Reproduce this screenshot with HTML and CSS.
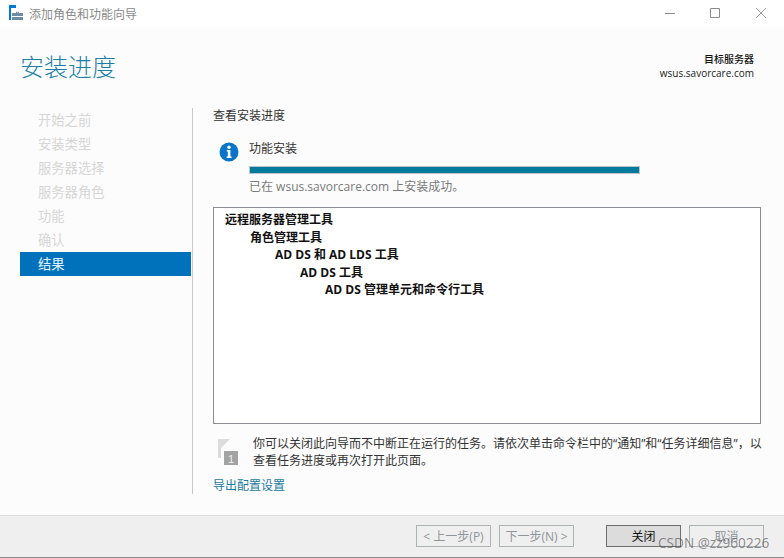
FILE: index.html
```html
<!DOCTYPE html>
<html lang="zh-CN">
<head>
<meta charset="utf-8">
<title>添加角色和功能向导</title>
<link rel="stylesheet" href="styles.css">
</head>
<body>
<div class="window">
  <div class="titlebar">
    <svg class="app-icon" width="16" height="16" viewBox="0 0 16 16">
      <path fill="#0078d7" d="M1 0h7v3H3v12H1z"/>
      <path fill="#6d8ca3" d="M4 8h4V6.800h3V8h4v3H4zM4 12h11v3H4z"/>
      <path fill="#fff" d="M8.800 7.400h1.400V8H8.800z"/>
    </svg>
    <span class="title-text">添加角色和功能向导</span>
    <div class="controls">
      <svg class="ctl ctl-min" width="10" height="10" viewBox="0 0 10 10"><path d="M0 5.500h10" stroke="#8c8c8c"/></svg>
      <svg class="ctl ctl-max" width="10" height="10" viewBox="0 0 10 10"><path d="M.5.500h9v9h-9z" fill="none" stroke="#8c8c8c"/></svg>
      <svg class="ctl" width="10" height="10" viewBox="0 0 10 10"><path d="M0 0l10 10M10 0L0 10" stroke="#a0a0a0"/></svg>
    </div>
  </div>
  <div class="content">
    <header class="head">
      <h1 class="page-title">安装进度</h1>
      <div class="server">
        <div class="server-label">目标服务器</div>
        <div class="server-name">wsus.savorcare.com</div>
      </div>
    </header>
    <div class="columns">
      <nav class="nav">
        <div class="nav-item">开始之前</div>
        <div class="nav-item">安装类型</div>
        <div class="nav-item">服务器选择</div>
        <div class="nav-item">服务器角色</div>
        <div class="nav-item">功能</div>
        <div class="nav-item">确认</div>
        <div class="nav-item nav-active">结果</div>
      </nav>
      <main class="main">
        <div class="section-title">查看安装进度</div>
        <div class="status">
          <svg class="info" width="20" height="20" viewBox="0 0 20 20">
            <circle cx="10" cy="10" r="9.500" fill="#0a74c9"/>
            <circle cx="10" cy="5.200" r="1.700" fill="#fff"/>
            <path fill="#fff" d="M7.800 8h3.600v6.500h1.200V16H7.600v-1.500h1.200V9.500h-1z"/>
          </svg>
          <div class="status-body">
            <div class="status-title">功能安装</div>
            <div class="bar"><div class="bar-fill"></div></div>
            <div class="status-msg">已在 wsus.savorcare.com 上安装成功。</div>
          </div>
        </div>
        <div class="tree">
          <div class="tree-row">远程服务器管理工具</div>
          <div class="tree-row lv1">角色管理工具</div>
          <div class="tree-row lv2">AD DS 和 AD LDS 工具</div>
          <div class="tree-row lv3">AD DS 工具</div>
          <div class="tree-row lv4">AD DS 管理单元和命令行工具</div>
        </div>
        <div class="note">
          <svg class="flag" width="22" height="28" viewBox="0 0 22 28">
            <path fill="#dcdcdc" d="M0 0h12L3 9v10H0z"/>
            <rect x="6" y="12" width="14" height="14" fill="#a3a3a3"/>
            <text x="13" y="23.500" text-anchor="middle" class="flag-num">1</text>
          </svg>
          <p class="note-text">你可以关闭此向导而不中断正在运行的任务。请依次单击命令栏中的“通知”和“任务详细信息”，以查看任务进度或再次打开此页面。</p>
        </div>
        <a class="export">导出配置设置</a>
      </main>
    </div>
  </div>
  <footer class="footer">
    <button class="btn btn-off">&lt; 上一步(P)</button>
    <button class="btn btn-off btn-next">下一步(N) &gt;</button>
    <button class="btn btn-main">关闭</button>
    <button class="btn btn-off">取消</button>
  </footer>
  <div class="watermark">CSDN @zz960226</div>
</div>
</body>
</html>
```
FILE: styles.css
```css
* { box-sizing: border-box; }
html, body { margin: 0; padding: 0; }
body {
  font-family: "Open Sans", "Noto Sans CJK SC", "Noto Sans", sans-serif;
  font-size: 12px;
  color: #222;
  background: #fcfcfc;
}
.window {
  position: relative;
  width: 784px;
  height: 558px;
  display: flex;
  flex-direction: column;
  overflow: hidden;
}
.titlebar {
  height: 28px;
  flex: none;
  background: #fff;
  display: flex;
  align-items: center;
  padding-left: 8px;
}
.app-icon { margin-right: 5px; margin-top: -2px; }
.title-text { color: #8a8a8a; font-size: 12px; }
.controls {
  margin-left: auto;
  display: flex;
  padding-right: 18px;
  margin-top: -2px;
}
.ctl-min { margin-right: 35px; }
.ctl-max { margin-right: 36px; }
.content { flex: 1; display: flex; flex-direction: column; min-height: 0; }
.head {
  display: flex;
  justify-content: space-between;
  height: 80px;
  padding: 21px 30px 0 20px;
}
.page-title {
  margin: 0;
  font-size: 24px;
  font-weight: 300;
  line-height: 36px;
  color: #1a7fa6;
}
.server { text-align: right; padding-top: 3px; }
.server-label { font-size: 10px; line-height: 15px; font-weight: 500; color: #111; }
.server-name { font-size: 10px; line-height: 13px; color: #222; }
.columns { flex: 1; display: flex; min-height: 0; padding-bottom: 21px; }
.nav { width: 172px; margin-left: 20px; flex: none; }
.nav-item {
  height: 24px;
  line-height: 23px;
  padding: 1px 0 0 18px;
  font-size: 13.300px;
  color: #d6d6d6;
  width: 171px;
}
.nav-active { background: #0072bc; color: #e6f2fa; }
.main {
  flex: 1;
  min-width: 0;
  border-left: 1px solid #c8c8c8;
  padding: 0 23px 0 20px;
  display: flex;
  flex-direction: column;
}
.section-title { line-height: 14px; margin-top: 1px; color: #333; }
.status { display: flex; margin-top: 13px; padding-left: 6px; }
.info { flex: none; margin-top: 6px; margin-right: 10px; }
.status-body { width: 391px; }
.status-title { line-height: 18px; margin-top: 4px; color: #333; }
.bar {
  margin-top: 8px;
  height: 8px;
  background: #047a9c;
  border: 1px solid #b8c4c8;
}
.bar-fill { height: 100%; width: 100%; background: #047a9c; }
.status-msg { margin-top: 5px; line-height: 16px; color: #7a7a7a; }
.tree {
  margin-top: 12px;
  height: 217px;
  flex: none;
  border: 1px solid #8b8f94;
  background: #fff;
  padding: 3px 11px;
  font-weight: 700;
  color: #111;
}
.tree-row { line-height: 17.500px; white-space: nowrap; }
.lv1 { padding-left: 25px; }
.lv2 { padding-left: 50px; }
.lv3 { padding-left: 75px; }
.lv4 { padding-left: 100px; }
.note { display: flex; margin-top: 11px; padding-left: 5px; }
.flag { flex: none; margin-right: 13px; margin-top: 4px; }
.flag-num { font-family: "Liberation Sans", sans-serif; font-size: 11px; fill: #eee; }
.note-text { margin: 0; width: 512px; line-height: 17px; color: #333; flex: none; }
.export { margin-top: 9px; line-height: 16px; color: #1a7a9c; }
.footer {
  height: 43px;
  flex: none;
  background: #efefef;
  border-top: 1px solid #dcdcdc;
  border-bottom: 1px solid #8a8a8a;
  display: flex;
  align-items: flex-start;
  padding: 9px 0 0 416px;
}
.btn {
  width: 75px;
  height: 22px;
  padding: 0;
  font: inherit;
  background: #efefef;
  border: 1px solid #adb2b5;
  color: #8f9599;
  margin-right: 8px;
}
.btn-next { margin-right: 32px; }
.btn-main { background: #dcdcdc; border-color: #6e6e6e; color: #111; }
.watermark {
  position: absolute;
  left: 658px;
  top: 534px;
  font-family: "Open Sans", sans-serif;
  font-size: 13.600px;
  line-height: 18px;
  color: rgba(80, 80, 80, .65);
}
```
